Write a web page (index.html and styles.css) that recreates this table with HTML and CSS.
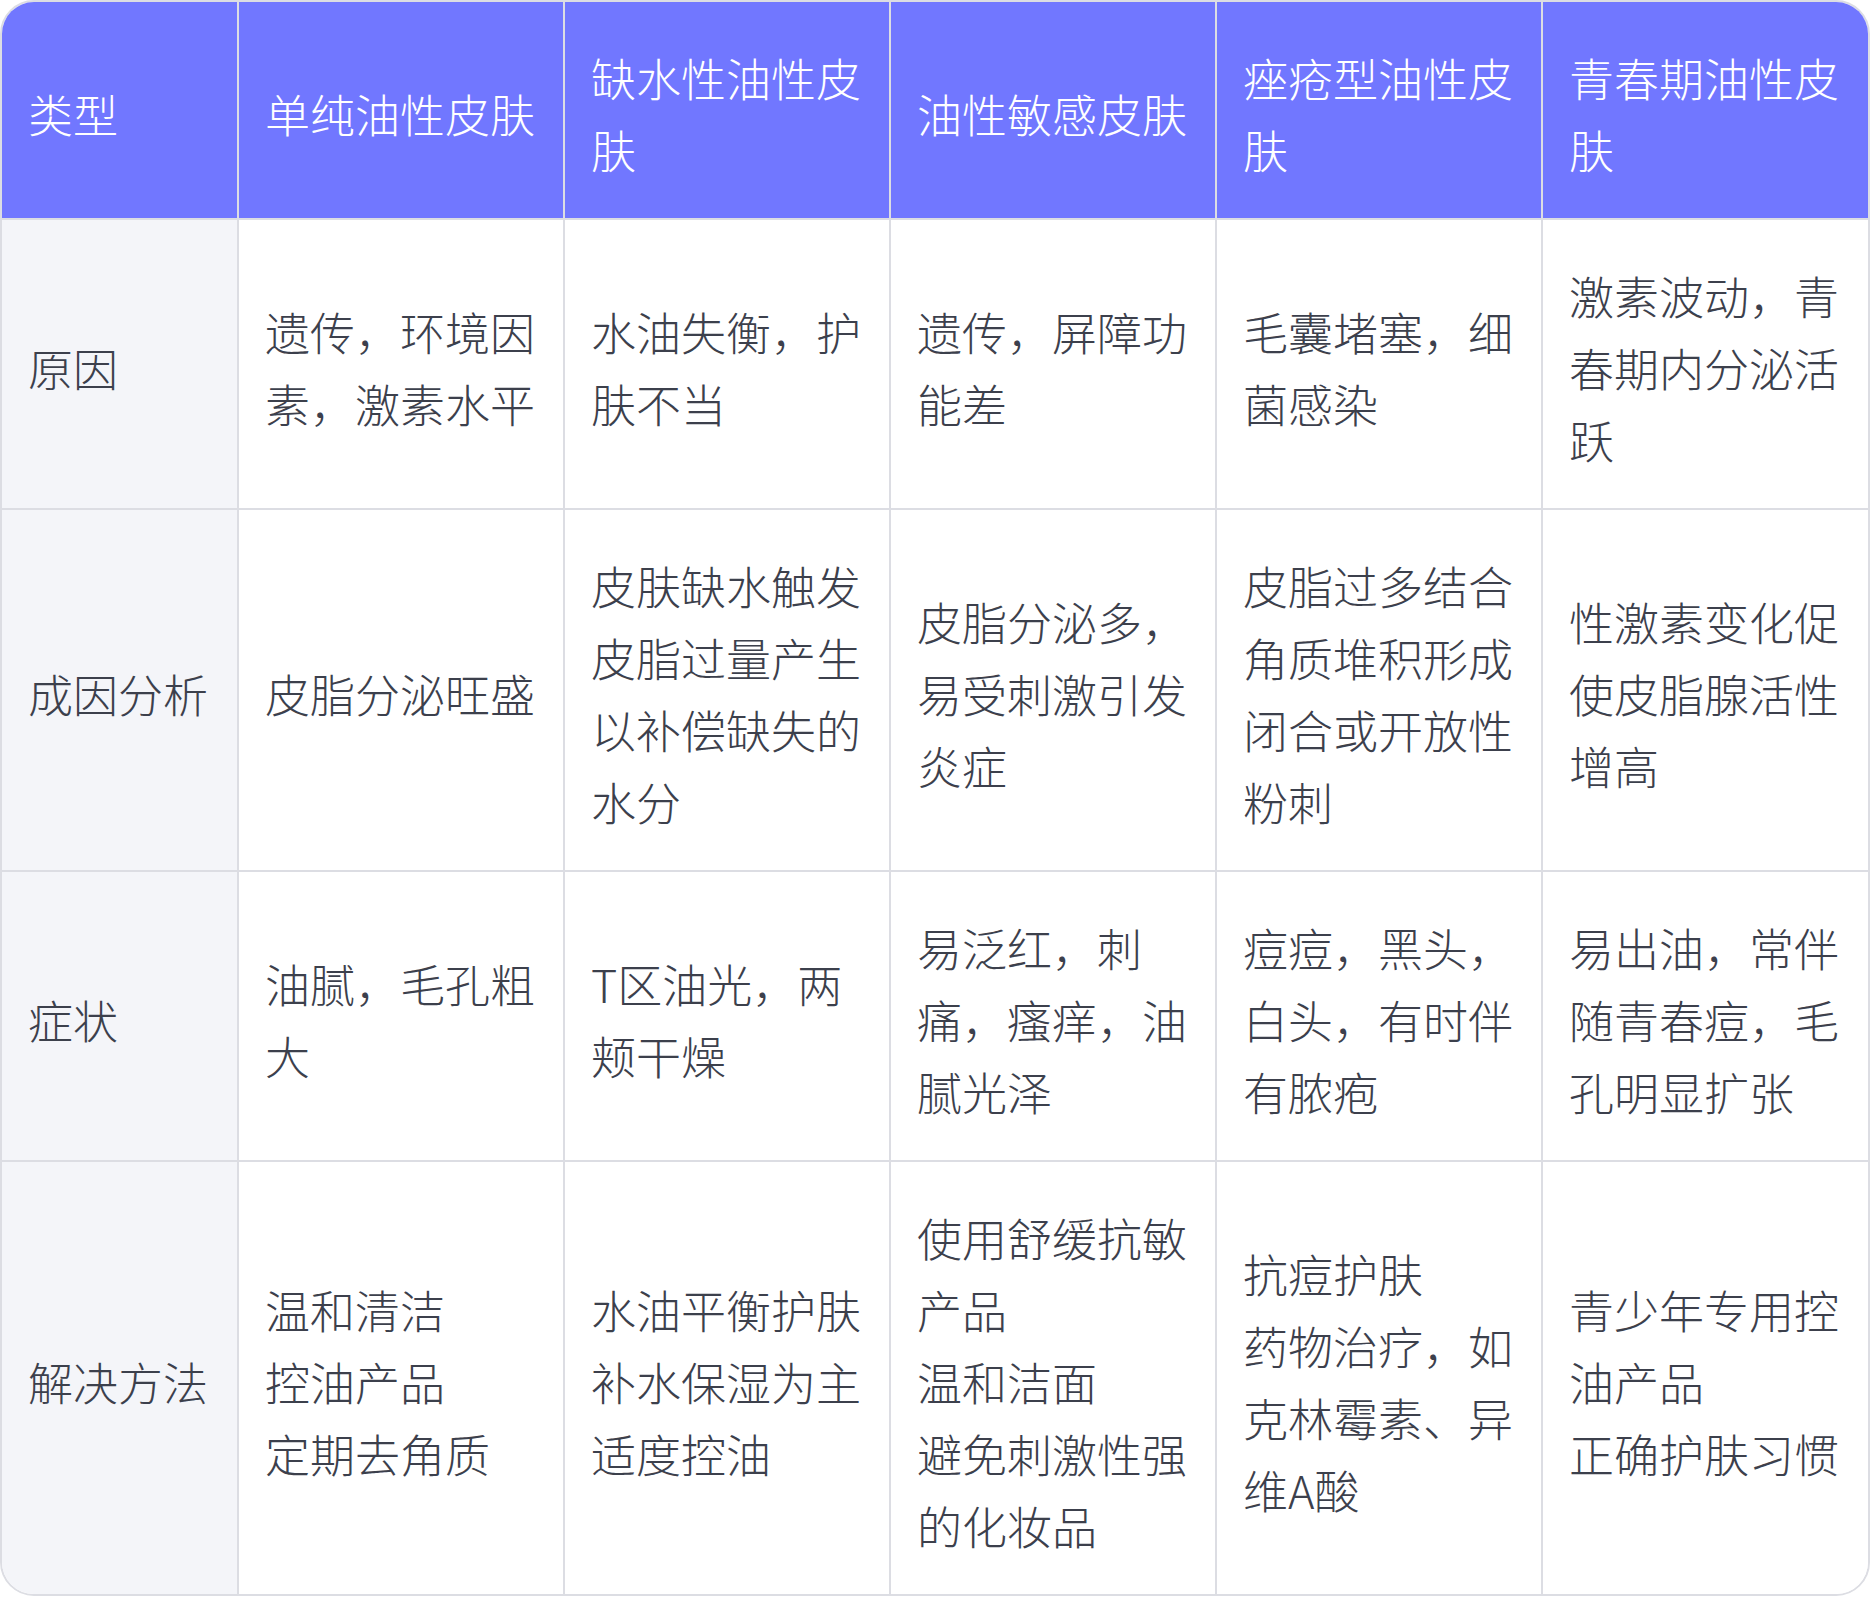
FILE: index.html
```html
<!DOCTYPE html>
<html lang="zh-CN">
<head>
<meta charset="utf-8">
<title>油性皮肤类型</title>
<link rel="stylesheet" href="styles.css">
</head>
<body>
<div class="wrap">
<table class="skin">
<colgroup>
<col class="c-first"><col class="c"><col class="c"><col class="c"><col class="c"><col class="c">
</colgroup>
<thead>
<tr>
<th>类型</th>
<th>单纯油性皮肤</th>
<th>缺水性油性皮肤</th>
<th>油性敏感皮肤</th>
<th>痤疮型油性皮肤</th>
<th>青春期油性皮肤</th>
</tr>
</thead>
<tbody>
<tr>
<td class="label">原因</td>
<td>遗传，环境因素，激素水平</td>
<td>水油失衡，护肤不当</td>
<td>遗传，屏障功能差</td>
<td>毛囊堵塞，细菌感染</td>
<td>激素波动，青春期内分泌活跃</td>
</tr>
<tr>
<td class="label">成因分析</td>
<td>皮脂分泌旺盛</td>
<td>皮肤缺水触发皮脂过量产生以补偿缺失的水分</td>
<td>皮脂分泌多，易受刺激引发炎症</td>
<td>皮脂过多结合角质堆积形成闭合或开放性粉刺</td>
<td>性激素变化促使皮脂腺活性增高</td>
</tr>
<tr>
<td class="label">症状</td>
<td>油腻，毛孔粗大</td>
<td>T区油光，两颊干燥</td>
<td>易泛红，刺痛，瘙痒，油腻光泽</td>
<td>痘痘，黑头，白头，有时伴有脓疱</td>
<td>易出油，常伴随青春痘，毛孔明显扩张</td>
</tr>
<tr>
<td class="label">解决方法</td>
<td>温和清洁<br>控油产品<br>定期去角质</td>
<td>水油平衡护肤<br>补水保湿为主<br>适度控油</td>
<td>使用舒缓抗敏产品<br>温和洁面<br>避免刺激性强的化妆品</td>
<td>抗痘护肤<br>药物治疗，如克林霉素、异维A酸</td>
<td>青少年专用控油产品<br>正确护肤习惯</td>
</tr>
</tbody>
</table>
</div>
</body>
</html>
```

FILE: styles.css
```css
html, body {
  margin: 0;
  padding: 0;
  background: #ffffff;
}

body {
  font-family: "Noto Sans CJK SC", "Noto Sans", sans-serif;
  color: #3c404c;
}

.wrap {
  box-sizing: border-box;
  width: 1870px;
  border: 2px solid #dcdde3;
  border-radius: 34px;
  overflow: hidden;
}

.skin {
  width: 100%;
  border-collapse: collapse;
  table-layout: fixed;
  font-size: 45px;
  line-height: 72px;
  font-weight: 300;
}

.c-first {
  width: 236px;
}

.skin th,
.skin td {
  border: 2px solid #dcdde3;
  padding: 40px 25px 32px 26px;
  text-align: left;
  vertical-align: middle;
  font-weight: 300;
}

.skin tr > :first-child {
  border-left: none;
}

.skin tr > :last-child {
  border-right: none;
}

.skin thead tr > * {
  border-top: none;
}

.skin tbody tr:last-child > * {
  border-bottom: none;
}

.skin th {
  background: #7177ff;
  color: #ffffff;
}

.skin td {
  background: #ffffff;
}

.skin td.label {
  background: #f4f5f9;
}
```
